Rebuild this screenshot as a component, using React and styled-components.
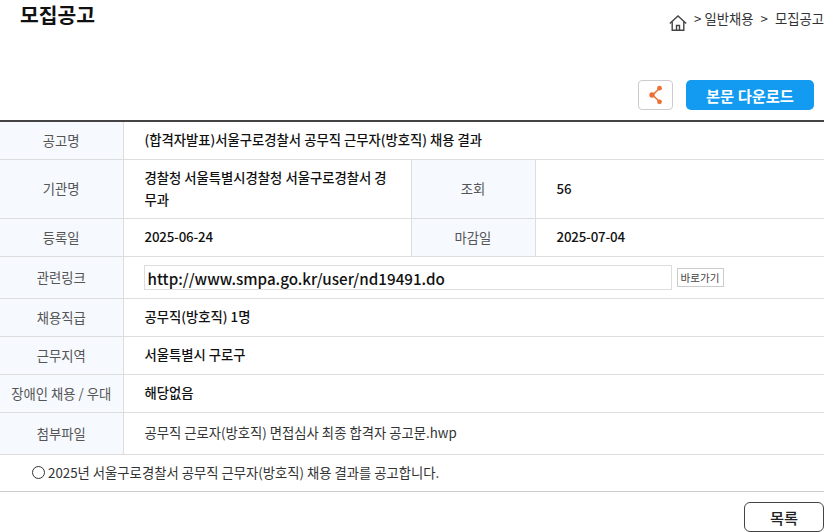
import styled, { createGlobalStyle } from 'styled-components'

const GlobalStyle = createGlobalStyle`
html, body {
  margin: 0;
  padding: 0;
  background: #fff;
  overflow: hidden;
}
* { box-sizing: border-box; }
body {
  font-family: "Noto Sans CJK KR", "Noto Sans", sans-serif;
  color: #111;
}
`

const Page = styled.div`
  width: 824px;
  height: 532px;
  overflow: hidden;
`
const Header = styled.div`
  display: flex;
  justify-content: space-between;
  align-items: flex-start;
  height: 80px;
  padding-left: 20px;
`
const Title = styled.h2`
  margin: 0;
  font-size: 20.4px;
  line-height: 28px;
  font-weight: 700;
  color: #111;
`
const Crumbs = styled.div`
  display: flex;
  align-items: flex-start;
  height: 24px;
  margin-top: 9px;
  gap: 6px;
  font-size: 13.33px;
  line-height: 20px;
  color: #333;
  white-space: nowrap;
`
const CrumbIcon = styled.span`
  display: flex;
  margin-top: 6px;
  margin-right: 1px;
`
const Sep = styled.span`
  margin: 0 1px;
`
const Actions = styled.div`
  display: flex;
  justify-content: flex-end;
  align-items: center;
  gap: 13px;
  height: 40px;
  padding: 0 10px 10px 0;
`
const ShareButton = styled.button`
  width: 35px;
  height: 30px;
  padding: 0;
  display: flex;
  align-items: center;
  justify-content: center;
  background: #fff;
  border: 1px solid #ccc;
  border-radius: 4px;
`
const DownloadButton = styled.button`
  width: 128px;
  height: 30px;
  padding: 0;
  border: none;
  border-radius: 5px;
  background: #129bf0;
  color: #fff;
  font-family: inherit;
  font-size: 15.3px;
  font-weight: 700;
`
const Table = styled.table`
  width: 824px;
  table-layout: fixed;
  border-collapse: collapse;
  border-top: 2px solid #444;
  font-size: 13.33px;
`
const Row = styled.tr`
  height: ${p => p.$h}px;
`
const Th = styled.th`
  background: #f6f9fd;
  border: 1px solid #ddd;
  border-left: none;
  border-top: none;
  font-weight: 400;
  color: #555;
  padding: 0;
  text-align: center;
  white-space: nowrap;
`
const Td = styled.td`
  border-bottom: 1px solid #ddd;
  border-right: 1px solid #ddd;
  padding: 0 20px 0 21px;
  font-weight: ${p => (p.$plain ? 400 : 500)};
  color: ${p => (p.$plain ? '#333' : '#111')};
  line-height: 22px;
  letter-spacing: ${p => (p.$numeric ? '-0.2px' : '0')};
  &:last-child { border-right: none; }
`
const LinkCell = styled.div`
  display: flex;
  align-items: center;
  gap: 5px;
  margin-left: -1px;
`
const LinkField = styled.div`
  width: 528px;
  height: 25px;
  border: 1px solid #ddd;
  padding-left: 3px;
  font-size: 15.2px;
  line-height: 24px;
  font-weight: 500;
  color: #111;
`
const GoButton = styled.button`
  width: 47px;
  height: 19px;
  padding: 0;
  border: 1px solid #ccc;
  background: #fff;
  color: #444;
  font-family: inherit;
  font-size: 10.6px;
  line-height: 17px;
`
const Notice = styled.div`
  height: 37px;
  display: flex;
  align-items: center;
  padding-left: 32px;
  border-bottom: 1px solid #ccc;
  font-size: 13.33px;
  color: #333;
  white-space: nowrap;
`
const Circle = styled.span`
  width: 13px;
  height: 13px;
  margin-right: 3px;
  border: 1px solid #333;
  border-radius: 50%;
  flex: none;
`
const Footer = styled.div`
  display: flex;
  justify-content: flex-end;
  padding-top: 10px;
`
const ListButton = styled.button`
  width: 80px;
  height: 30px;
  padding: 0;
  background: #fff;
  border: 1px solid #444;
  border-radius: 6px;
  color: #222;
  font-family: inherit;
  font-size: 15.3px;
  font-weight: 500;
`

const HomeIcon = () => (
  <svg width="18" height="16" viewBox="0 0 18 16" fill="none" stroke="#444" strokeWidth="1.4">
    <path d="M0.8 8.4 L9 1 L17.2 8.4" />
    <path d="M3.2 6.6 V15.2 H14.8 V6.6" />
    <path d="M7.5 15.2 V10.5 H10.5 V15.2" />
  </svg>
)

const ShareIcon = () => (
  <svg width="14" height="20" viewBox="0 0 14 20">
    <path d="M10.5 3.5 L3.5 10 L10.5 16.5" fill="none" stroke="#ee6f35" strokeWidth="1.5" />
    <circle cx="10.5" cy="3.2" r="2.4" fill="#ee6f35" />
    <circle cx="3" cy="10" r="2.7" fill="#ee6f35" />
    <circle cx="10.5" cy="16.8" r="2.4" fill="#ee6f35" />
  </svg>
)

const App = () => {
  return (
    <Page>
      <GlobalStyle />
      <Header>
        <Title>모집공고</Title>
        <Crumbs>
          <CrumbIcon><HomeIcon /></CrumbIcon>
          <span>&gt; 일반채용</span>
          <Sep>&gt;</Sep>
          <span>모집공고</span>
        </Crumbs>
      </Header>
      <Actions>
        <ShareButton><ShareIcon /></ShareButton>
        <DownloadButton>본문 다운로드</DownloadButton>
      </Actions>
      <Table>
        <colgroup>
          <col style={{ width: 123 }} />
          <col style={{ width: 288 }} />
          <col style={{ width: 124 }} />
          <col />
        </colgroup>
        <tbody>
          <Row $h={38}>
            <Th>공고명</Th>
            <Td colSpan={3}>(합격자발표)서울구로경찰서 공무직 근무자(방호직) 채용 결과</Td>
          </Row>
          <Row $h={59}>
            <Th>기관명</Th>
            <Td>경찰청 서울특별시경찰청 서울구로경찰서 경무과</Td>
            <Th>조회</Th>
            <Td $numeric>56</Td>
          </Row>
          <Row $h={38}>
            <Th>등록일</Th>
            <Td $numeric>2025-06-24</Td>
            <Th>마감일</Th>
            <Td $numeric>2025-07-04</Td>
          </Row>
          <Row $h={42}>
            <Th>관련링크</Th>
            <Td colSpan={3}>
              <LinkCell>
                <LinkField>http://www.smpa.go.kr/user/nd19491.do</LinkField>
                <GoButton>바로가기</GoButton>
              </LinkCell>
            </Td>
          </Row>
          <Row $h={38}>
            <Th>채용직급</Th>
            <Td colSpan={3}>공무직(방호직) 1명</Td>
          </Row>
          <Row $h={38}>
            <Th>근무지역</Th>
            <Td colSpan={3}>서울특별시 구로구</Td>
          </Row>
          <Row $h={38}>
            <Th>장애인 채용 / 우대</Th>
            <Td colSpan={3}>해당없음</Td>
          </Row>
          <Row $h={42}>
            <Th>첨부파일</Th>
            <Td colSpan={3} $plain>공무직 근로자(방호직) 면접심사 최종 합격자 공고문.hwp</Td>
          </Row>
        </tbody>
      </Table>
      <Notice>
        <Circle />
        2025년 서울구로경찰서 공무직 근무자(방호직) 채용 결과를 공고합니다.
      </Notice>
      <Footer>
        <ListButton>목록</ListButton>
      </Footer>
    </Page>
  )
}

export default App
